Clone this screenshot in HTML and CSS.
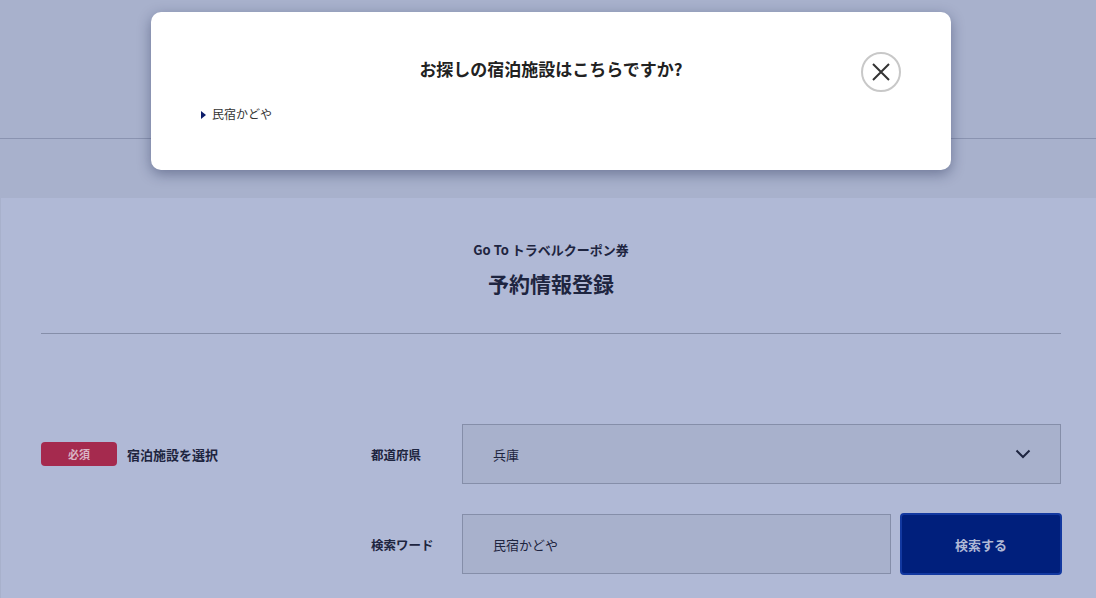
FILE: index.html
```html
<!DOCTYPE html>
<html lang="ja">
<head>
<meta charset="utf-8">
<title>予約情報登録</title>
<link rel="stylesheet" href="styles.css">
</head>
<body>
<header class="site-header"></header>
<div class="band"></div>
<main class="main">
  <div class="heading">
    <p class="subtitle">Go To トラベルクーポン券</p>
    <h1 class="title">予約情報登録</h1>
  </div>
  <hr class="divider">
  <div class="form">
    <div class="label-col">
      <span class="badge">必須</span>
      <span class="label-text">宿泊施設を選択</span>
    </div>
    <div class="fields">
      <div class="field-row">
        <span class="field-label">都道府県</span>
        <div class="select">
          <span>兵庫</span>
          <svg class="chevron" width="16" height="10" viewBox="0 0 16 10"><path d="M1.5 1.5 L8 8 L14.5 1.5" fill="none" stroke="#1e2540" stroke-width="2"/></svg>
        </div>
      </div>
      <div class="field-row">
        <span class="field-label">検索ワード</span>
        <div class="input">民宿かどや</div>
        <button class="search-btn">検索する</button>
      </div>
    </div>
  </div>
</main>

<div class="modal">
  <h2 class="modal-title">お探しの宿泊施設はこちらですか?</h2>
  <ul class="results">
    <li class="result"><span class="tri"></span>民宿かどや</li>
  </ul>
  <button class="close" aria-label="閉じる">
    <svg width="20" height="20" viewBox="0 0 20 20"><path d="M2 2 L18 18 M18 2 L2 18" stroke="#333" stroke-width="2" fill="none"/></svg>
  </button>
</div>
</body>
</html>
```
FILE: styles.css
```css
* { box-sizing: border-box; }
html, body { margin: 0; padding: 0; }
body {
  background: #a8b1cc;
  font-family: "Noto Sans CJK JP", "Noto Sans", sans-serif;
  color: #1e2540;
  width: 1096px;
  height: 598px;
  overflow: hidden;
  position: relative;
}
.site-header {
  height: 139px;
  border-bottom: 1px solid #8a93b0;
}
.band { height: 59px; }
.main {
  background: #b0b9d6;
  margin-left: 1px;
  padding: 42px 35px 40px 40px;
  min-height: 400px;
}
.heading { text-align: center; }
.subtitle {
  margin: 0;
  font-size: 13px;
  font-weight: 700;
  line-height: 20px;
}
.title {
  margin: 8px 0 0;
  font-size: 21px;
  font-weight: 700;
  line-height: 30px;
}
.divider {
  border: 0;
  border-top: 1px solid #858ea9;
  margin: 35px 0 0;
}
.form {
  display: flex;
  margin-top: 90px;
}
.label-col {
  width: 330px;
  display: flex;
  align-items: center;
  gap: 10px;
  height: 60px;
}
.badge {
  width: 76px;
  height: 24px;
  border-radius: 4px;
  background: #a52a4e;
  color: #d8b4c4;
  font-size: 11px;
  font-weight: 700;
  display: flex;
  align-items: center;
  justify-content: center;
}
.label-text { font-size: 13px; font-weight: 700; }
.fields {
  flex: 1;
  display: flex;
  flex-direction: column;
  gap: 29px;
}
.field-row {
  display: flex;
  align-items: center;
}
.field-label {
  width: 91px;
  font-size: 12.5px;
  font-weight: 700;
}
.select, .input {
  height: 60px;
  background: #a8b1cc;
  border: 1px solid #858ea9;
  display: flex;
  align-items: center;
  padding: 0 30px;
  font-size: 13px;
}
.select {
  flex: 1;
  justify-content: space-between;
  padding-right: 29px;
}
.input { width: 429px; }
.search-btn {
  margin-left: 9px;
  width: 162px;
  height: 62px;
  background: #001f7c;
  border: 2px solid #1238a0;
  border-radius: 4px;
  color: #b0b9d6;
  font-family: inherit;
  font-size: 13px;
  font-weight: 700;
  margin-right: -1px;
}
.modal {
  position: absolute;
  top: 12px;
  left: 151px;
  width: 800px;
  height: 158px;
  background: #fff;
  border-radius: 10px;
  box-shadow: 0 4px 14px rgba(20, 30, 70, 0.4);
  padding: 44px 50px 0;
}
.modal-title {
  margin: 0;
  text-align: center;
  font-size: 17px;
  font-weight: 700;
  line-height: 26px;
  color: #222;
}
.results {
  list-style: none;
  margin: 23px 0 0;
  padding: 0;
}
.result {
  font-size: 12px;
  line-height: 18px;
  color: #333;
  display: flex;
  align-items: center;
}
.tri {
  width: 0;
  height: 0;
  border-left: 5px solid #0d1d6b;
  border-top: 4px solid transparent;
  border-bottom: 4px solid transparent;
  margin-right: 6px;
  margin-top: 2px;
}
.close {
  position: absolute;
  left: 710px;
  top: 40px;
  width: 40px;
  height: 40px;
  border-radius: 50%;
  border: 2px solid #c8c8c8;
  background: #fff;
  display: flex;
  align-items: center;
  justify-content: center;
  padding: 0;
}
```
